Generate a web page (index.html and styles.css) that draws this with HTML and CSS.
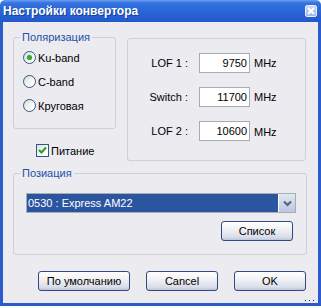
FILE: index.html
```html
<!DOCTYPE html>
<html>
<head>
    <title>Настройки конвертора</title>
    <meta charset="utf-8">
    <link rel="stylesheet" href="styles.css">
</head>
<body>
    <div class="window">
        <div class="titlebar">
            <span class="title">Настройки конвертора</span>
            <span class="close">
                <svg width="10" height="10" viewBox="0 0 10 10"><path d="M2 2 L8 8 M8 2 L2 8" stroke="#fff" stroke-width="2"/></svg>
            </span>
        </div>
        <div class="client">
            <div class="top">
                <div class="left-col">
                    <fieldset class="group polar">
                        <legend>Поляризация</legend>
                        <div class="radios">
                            <label class="radio"><span class="dot on"></span>Ku-band</label>
                            <label class="radio"><span class="dot"></span>C-band</label>
                            <label class="radio"><span class="dot"></span>Круговая</label>
                        </div>
                    </fieldset>
                    <label class="check">
                        <span class="box"><svg width="11" height="11" viewBox="0 0 11 11"><path d="M2 5 L4.5 7.5 L9 2.5" fill="none" stroke="#21a121" stroke-width="2"/></svg></span>Питание
                    </label>
                </div>
                <fieldset class="group lof">
                    <div class="row"><span class="lbl">LOF 1 :</span><span class="field">9750</span><span class="unit">MHz</span></div>
                    <div class="row"><span class="lbl">Switch :</span><span class="field">11700</span><span class="unit">MHz</span></div>
                    <div class="row last"><span class="lbl">LOF 2 :</span><span class="field">10600</span><span class="unit low">MHz</span></div>
                </fieldset>
            </div>
            <fieldset class="group pos">
                <legend>Позиация</legend>
                <div class="pos-body">
                    <div class="combo">
                        <span class="combo-text">0530 : Express AM22</span>
                        <span class="combo-btn"><svg width="9" height="7" viewBox="0 0 9 7"><path d="M1 1.5 L4.5 5 L8 1.5" fill="none" stroke="#4d6185" stroke-width="2"/></svg></span>
                    </div>
                    <div class="list-row"><button class="btn list">Список</button></div>
                </div>
            </fieldset>
            <div class="buttons">
                <button class="btn wide">По умолчанию</button>
                <button class="btn">Cancel</button>
                <button class="btn">OK</button>
            </div>
            <span class="grip"><i></i><i></i><i></i></span>
        </div>
    </div>
</body>
</html>
```

FILE: styles.css
```css
* {
    box-sizing: border-box;
}
html, body {
    margin: 0;
    padding: 0;
}
body {
    font-family: "Liberation Sans", Arial, sans-serif;
    font-size: 11px;
    color: #000;
    background: #ffffff;
}
.window {
    width: 321px;
    height: 306px;
    display: flex;
    flex-direction: column;
}
.titlebar {
    height: 22px;
    display: flex;
    align-items: center;
    justify-content: space-between;
    padding: 0 4px 0 3px;
    border-radius: 5px 5px 0 0;
    background: linear-gradient(to bottom, #6d9ff0 0, #3373e0 3px, #2a66d8 50%, #2258cb 100%);
}
.title {
    color: #fff;
    font-weight: bold;
    font-size: 12px;
    text-shadow: 1px 1px 0 #17409a;
}
.close {
    width: 12px;
    height: 12px;
    display: flex;
    align-items: center;
    justify-content: center;
    border: 1px solid #e8eefa;
    border-radius: 2px;
    background: linear-gradient(#c9d7f2, #9fb5e2);
}
.client {
    flex: 1;
    position: relative;
    background: #ecebf0;
    border: 3px solid #2a5ccb;
    border-top: 0;
    padding: 9px 0 0 10px;
}
.top {
    display: flex;
    align-items: flex-start;
    height: 130px;
}
.left-col {
    width: 103px;
}
.group {
    margin: 0;
    padding: 0;
    min-width: 0;
    border: 1px solid #cfcfd6;
    border-radius: 3px;
}
legend {
    margin-left: 6px;
    padding: 0 2px;
    line-height: 13px;
    color: #2150a8;
}
.polar {
    width: 103px;
    height: 98px;
}
.radios {
    padding: 7px 0 0 9px;
}
.radio {
    display: flex;
    align-items: center;
    gap: 2px;
    height: 13px;
    margin-bottom: 11px;
}
.dot {
    width: 13px;
    height: 13px;
    border-radius: 50%;
    border: 1px solid #2b5a8a;
    background: linear-gradient(135deg, #d8d8d4, #ffffff 70%);
    display: flex;
    align-items: center;
    justify-content: center;
}
.dot.on::after {
    content: "";
    width: 5px;
    height: 5px;
    border-radius: 50%;
    background: #37a837;
    box-shadow: 0 0 1px #7ccc6c;
}
.check {
    display: flex;
    align-items: center;
    gap: 2px;
    height: 13px;
    margin: 15px 0 0 23px;
}
.box {
    width: 13px;
    height: 13px;
    border: 1px solid #2b5a8a;
    background: linear-gradient(135deg, #dcdcd8, #ffffff 70%);
    display: flex;
    align-items: center;
    justify-content: center;
}
.lof {
    width: 179px;
    height: 123px;
    margin: 7px 0 0 11px;
    padding-top: 14px;
}
.row {
    display: flex;
    align-items: center;
    height: 20px;
    margin-bottom: 14px;
}
.row.last {
    margin-top: 4px;
}
.lbl {
    width: 60px;
    text-align: right;
    margin-right: 11px;
}
.field {
    width: 51px;
    height: 20px;
    line-height: 18px;
    border: 1px solid #a5acb5;
    background: #fff;
    text-align: right;
    padding-right: 2px;
}
.unit {
    margin-left: 4px;
}
.unit.low {
    margin-top: 2px;
}
.pos {
    width: 294px;
    height: 88px;
    margin-top: 6px;
}
.pos-body {
    padding: 13px 10px 0 12px;
}
.combo {
    display: flex;
    height: 20px;
    border: 1px solid #a5acb5;
    background: #fff;
}
.combo-text {
    flex: 1;
    background: #2c55a0;
    color: #fff;
    line-height: 18px;
    padding-left: 1px;
}
.combo-btn {
    width: 17px;
    display: flex;
    align-items: center;
    justify-content: center;
    border-left: 1px solid #fff;
    background: linear-gradient(#e2e7f1, #bcc7dc);
}
.list-row {
    display: flex;
    justify-content: flex-end;
    margin-top: 8px;
}
.btn {
    font: inherit;
    color: #000;
    width: 72px;
    height: 20px;
    padding: 0;
    border: 1px solid #34487c;
    border-radius: 3px;
    background: linear-gradient(#ffffff, #f2f2f5 40%, #d8dde8 85%, #bcc5d8);
}
.btn.list {
    margin-right: 3px;
}
.btn.wide {
    width: 92px;
}
.buttons {
    display: flex;
    gap: 16px;
    margin-top: 16px;
    padding-left: 25px;
}
.grip {
    position: absolute;
    right: 3px;
    bottom: 1px;
    display: flex;
    gap: 1px;
}
.grip i {
    width: 3px;
    height: 3px;
    background: #2a2a2a;
    border: 1px solid #e8e8e8;
}
```
